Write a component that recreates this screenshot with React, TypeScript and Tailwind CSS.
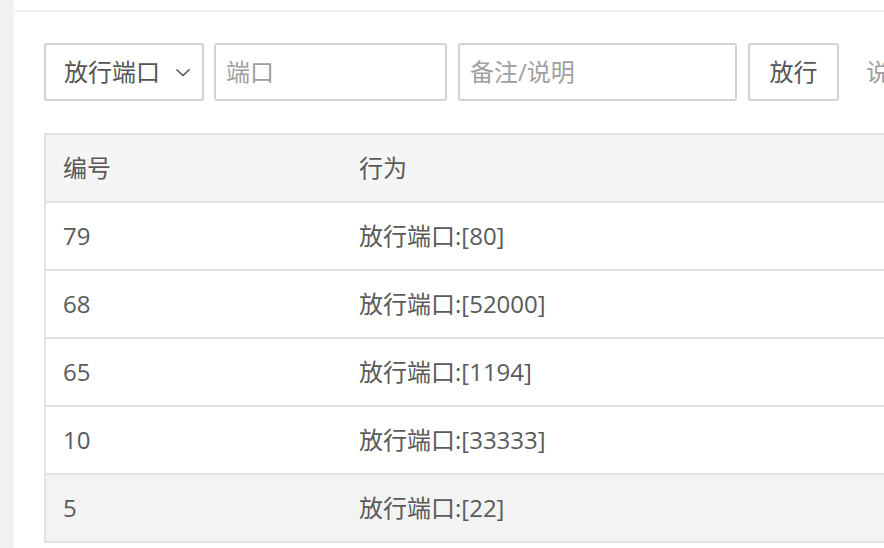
import React from "react";

const rows = [
  { id: "79", act: "放行端口:[80]" },
  { id: "68", act: "放行端口:[52000]" },
  { id: "65", act: "放行端口:[1194]" },
  { id: "10", act: "放行端口:[33333]" },
  { id: "5", act: "放行端口:[22]", hover: true },
];

const font = { fontFamily: '"Open Sans", "Noto Sans CJK SC", sans-serif' };

export default function App() {
  return (
    <div
      className="flex h-[548px] w-[884px] overflow-hidden bg-white text-[24px] text-[#5a5a5a]"
      style={font}
    >
      <div className="w-[14px] shrink-0 bg-[#f2f2f2]" />
      <div className="min-w-0 flex-1 overflow-hidden">
        <div className="h-[12px] border-b-2 border-[#f0f0f0]" />
        <div className="w-[1200px] pl-[30px] pt-[31px]">
          <div className="flex items-center">
            <div className="flex h-[58px] w-[160px] items-center justify-between rounded-[3px] border-2 border-[#d2d2d2] pl-[18px] pr-[11px] text-[#555]">
              <span>放行端口</span>
              <svg width="16" height="9" viewBox="0 0 16 9" fill="none">
                <polyline points="1.5,1.5 8,7.5 14.5,1.5" stroke="#555" strokeWidth="1.6" />
              </svg>
            </div>
            <div className="ml-[10px] flex h-[58px] w-[233px] items-center rounded-[3px] border-2 border-[#d2d2d2] pl-[10px] text-[#a0a0a0]">
              端口
            </div>
            <div className="ml-[11px] flex h-[58px] w-[279px] items-center rounded-[3px] border-2 border-[#d2d2d2] pl-[10px] text-[#a0a0a0]">
              备注/说明
            </div>
            <div className="ml-[11px] flex h-[58px] w-[91px] items-center justify-center rounded-[3px] border-2 border-[#d2d2d2] text-[#555]">
              放行
            </div>
            <div className="ml-[27px] text-[#a0a0a0]">说明</div>
          </div>
          <div className="mt-[32px] border-2 border-[#e2e2e2]">
            <div className="flex h-[66px] items-center bg-[#f5f5f5]">
              <div className="w-[296px] pl-[17px]">编号</div>
              <div className="pl-[17px]">行为</div>
            </div>
            {rows.map((r) => (
              <div
                key={r.id}
                className={`flex h-[68px] items-center border-t-2 border-[#e2e2e2] ${r.hover ? "bg-[#f3f3f3]" : "bg-white"}`}
              >
                <div className="w-[296px] pl-[17px]">{r.id}</div>
                <div className="pl-[17px]">{r.act}</div>
              </div>
            ))}
          </div>
        </div>
      </div>
    </div>
  );
}
